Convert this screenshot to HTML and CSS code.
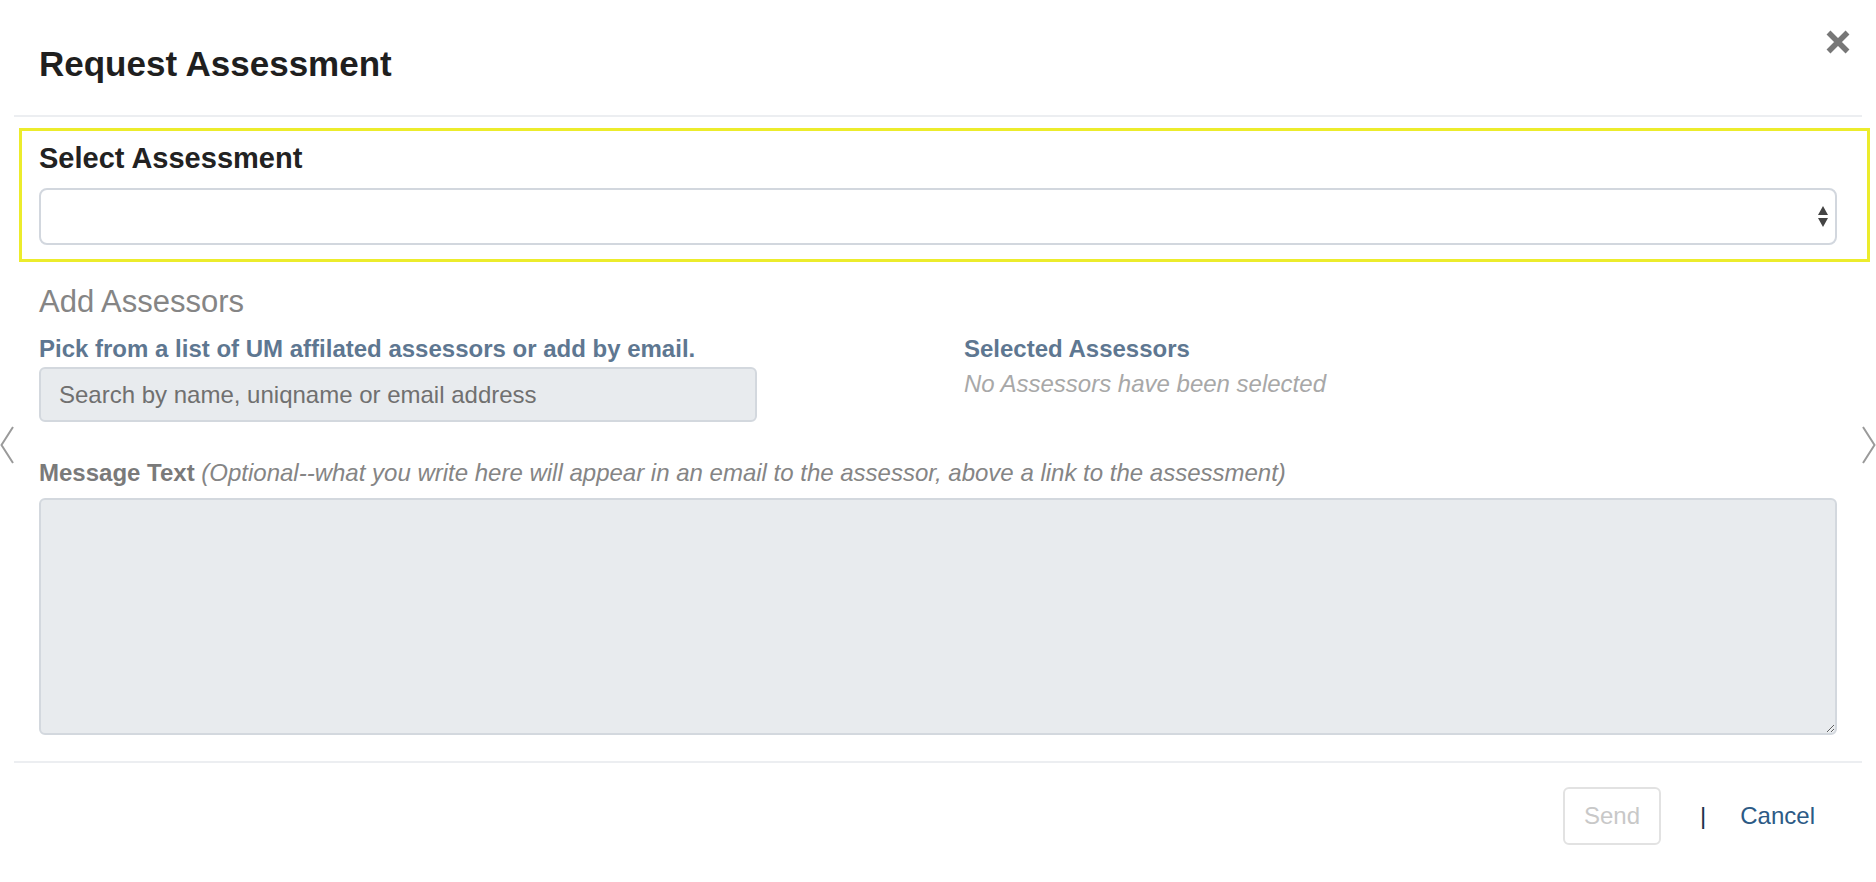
FILE: index.html
```html
<!DOCTYPE html>
<html>
<head>
    <title>Request Assessment</title>
    <link rel="stylesheet" href="styles.css">
</head>
<body>
    <div class="carousel-arrow left">
        <svg width="14" height="38" viewBox="0 0 14 38"><polyline points="13,1 1.5,19 13,37" fill="none" stroke="#9a9a9a" stroke-width="2"/></svg>
    </div>
    <div class="carousel-arrow right">
        <svg width="14" height="38" viewBox="0 0 14 38"><polyline points="1,1 12.5,19 1,37" fill="none" stroke="#9a9a9a" stroke-width="2"/></svg>
    </div>

    <div class="modal">
        <div class="modal-header">
            <h4 class="modal-title">Request Assessment</h4>
            <button class="close" aria-label="Close">
                <svg width="24" height="24" viewBox="0 0 24 24"><path d="M2.5 2.5L21.5 21.5M21.5 2.5L2.5 21.5" stroke="#777" stroke-width="5.5"/></svg>
            </button>
        </div>

        <div class="modal-body">
            <div class="highlight">
                <label class="field-label" for="assessment">Select Assessment</label>
                <div class="select-wrap">
                    <select id="assessment" class="assessment-select">
                        <option></option>
                    </select>
                    <svg class="select-arrows" width="10" height="21" viewBox="0 0 10 21"><path d="M5 0L10 9H0Z M0 12H10L5 21Z" fill="#444"/></svg>
                </div>
            </div>

            <h5 class="section-title">Add Assessors</h5>

            <div class="assessor-row">
                <div class="assessor-col">
                    <div class="sub-label">Pick from a list of UM affilated assessors or add by email.</div>
                    <input type="text" class="search-input" placeholder="Search by name, uniqname or email address">
                </div>
                <div class="assessor-col">
                    <div class="sub-label">Selected Assessors</div>
                    <div class="empty-note">No Assessors have been selected</div>
                </div>
            </div>

            <label class="message-label" for="message">Message Text <em>(Optional--what you write here will appear in an email to the assessor, above a link to the assessment)</em></label>
            <textarea id="message" class="message-text"></textarea>
        </div>

        <div class="modal-footer">
            <button class="send-btn" disabled>Send</button>
            <span class="divider">|</span>
            <a class="cancel-link" href="#">Cancel</a>
        </div>
    </div>
</body>
</html>
```

FILE: styles.css
```css
body {
    margin: 0;
    font-family: "Liberation Sans", Arial, sans-serif;
    color: #222;
    background: #fff;
}
.carousel-arrow {
    position: absolute;
    top: 426px;
}
.carousel-arrow.left {
    left: 0;
}
.carousel-arrow.right {
    right: 0;
}
.modal {
    margin: 0 14px;
}
.modal-header {
    display: flex;
    justify-content: space-between;
    align-items: flex-start;
    padding: 30px 12px 31px 25px;
    border-bottom: 2px solid #eceef1;
}
.modal-title {
    margin: 14px 0 0 0;
    font-size: 35px;
    line-height: 40px;
    font-weight: bold;
    color: #1f1f1f;
}
.close {
    border: 0;
    background: none;
    padding: 0;
    width: 24px;
    height: 24px;
    cursor: pointer;
}
.modal-body {
    padding: 11px 25px 26px 25px;
}
.highlight {
    margin: 0 -33px 0 -20px;
    padding: 11px 30px 14px 17px;
    border: 3px solid #ecec2c;
}
.field-label {
    display: block;
    font-size: 29px;
    line-height: 32px;
    font-weight: bold;
    color: #222;
    margin-bottom: 14px;
}
.select-wrap {
    position: relative;
}
.assessment-select {
    display: block;
    width: 100%;
    height: 57px;
    border: 2px solid #d2d7de;
    border-radius: 8px;
    background: #fff;
    appearance: none;
    -webkit-appearance: none;
    font-family: inherit;
    font-size: 24px;
}
.select-arrows {
    position: absolute;
    right: 9px;
    top: 18px;
}
.section-title {
    margin: 23px 0 16px 0;
    font-size: 31px;
    line-height: 34px;
    font-weight: normal;
    color: #858585;
}
.assessor-row {
    display: grid;
    grid-template-columns: 1fr 1fr;
    column-gap: 52px;
}
.sub-label {
    font-size: 24px;
    line-height: 28px;
    font-weight: bold;
    color: #5e7791;
}
.search-input {
    display: block;
    box-sizing: border-box;
    width: 718px;
    height: 55px;
    margin-top: 4px;
    padding: 0 18px;
    border: 2px solid #d3d8de;
    border-radius: 6px;
    background: #e8ebee;
    font-family: inherit;
    font-size: 24px;
    color: #333;
}
.search-input::placeholder {
    color: #707070;
}
.empty-note {
    margin-top: 7px;
    font-size: 24px;
    line-height: 28px;
    font-style: italic;
    color: #a8a8a8;
}
.message-label {
    display: block;
    margin-top: 37px;
    font-size: 24px;
    line-height: 28px;
    font-weight: bold;
    color: #7a7a7a;
}
.message-label em {
    font-weight: normal;
    color: #858585;
}
.message-text {
    display: block;
    box-sizing: border-box;
    width: 100%;
    height: 237px;
    margin-top: 11px;
    border: 2px solid #d3d8de;
    border-radius: 6px;
    background: #e8ebee;
    font-family: inherit;
    font-size: 24px;
    resize: vertical;
}
.modal-footer {
    display: flex;
    justify-content: flex-end;
    align-items: center;
    padding: 24px 47px 30px 0;
    border-top: 2px solid #eceef1;
}
.send-btn {
    width: 98px;
    height: 58px;
    border: 2px solid #e2e2e2;
    border-radius: 6px;
    background: #fff;
    font-family: inherit;
    font-size: 24px;
    color: #c8c8c8;
}
.divider {
    margin: 0 34px 0 39px;
    font-size: 24px;
    color: #1c2f4a;
}
.cancel-link {
    font-size: 24px;
    color: #2c5a85;
    text-decoration: none;
}
```
